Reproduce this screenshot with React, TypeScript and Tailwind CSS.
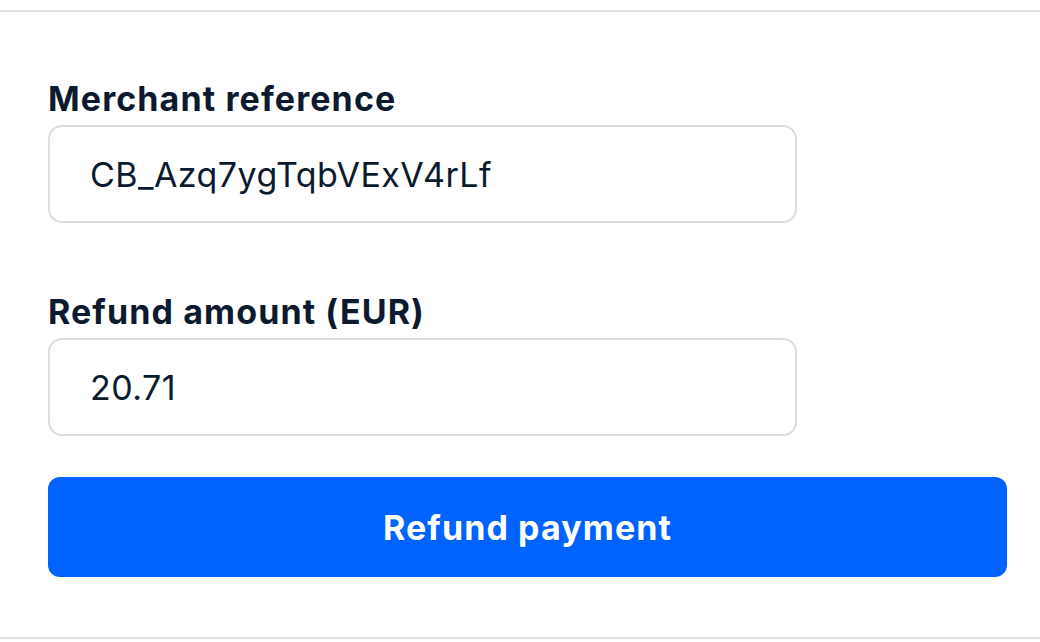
import { useState } from "react";

export default function App() {
  const [reference, setReference] = useState("CB_Azq7ygTqbVExV4rLf");
  const [amount, setAmount] = useState("20.71");

  const labelClass = "block text-[34px] leading-[40px] font-bold tracking-[1.1px] text-[#0b1a2e]";
  const inputClass =
    "mt-[6px] block h-[98px] w-[749px] rounded-[14px] border-2 border-[#dadee3] bg-white px-[40px] text-[34px] tracking-[0.45px] text-[#0b1a2e] outline-none";

  return (
    <div className="min-h-screen bg-white pt-[10px] font-['Inter','Liberation_Sans',sans-serif]">
      <form
        onSubmit={(e) => e.preventDefault()}
        className="border-y-2 border-[#dde1e5] pl-12 pr-[33px] pt-[67px] pb-[60px]"
      >
        {/* Merchant reference */}
        <div>
          <label className={labelClass}>Merchant reference</label>
          <input type="text" value={reference} onChange={(e) => setReference(e.target.value)} className={inputClass} />
        </div>

        {/* Refund amount */}
        <div className="mt-[69px]">
          <label className={labelClass}>Refund amount (EUR)</label>
          <input type="text" value={amount} onChange={(e) => setAmount(e.target.value)} className={inputClass} />
        </div>

        <button
          type="submit"
          className="mt-[41px] flex h-[100px] w-full items-center justify-center rounded-[12px] bg-[#0062ff] text-[34px] font-bold tracking-[1.1px] text-white"
        >
          Refund payment
        </button>
      </form>
    </div>
  );
}
